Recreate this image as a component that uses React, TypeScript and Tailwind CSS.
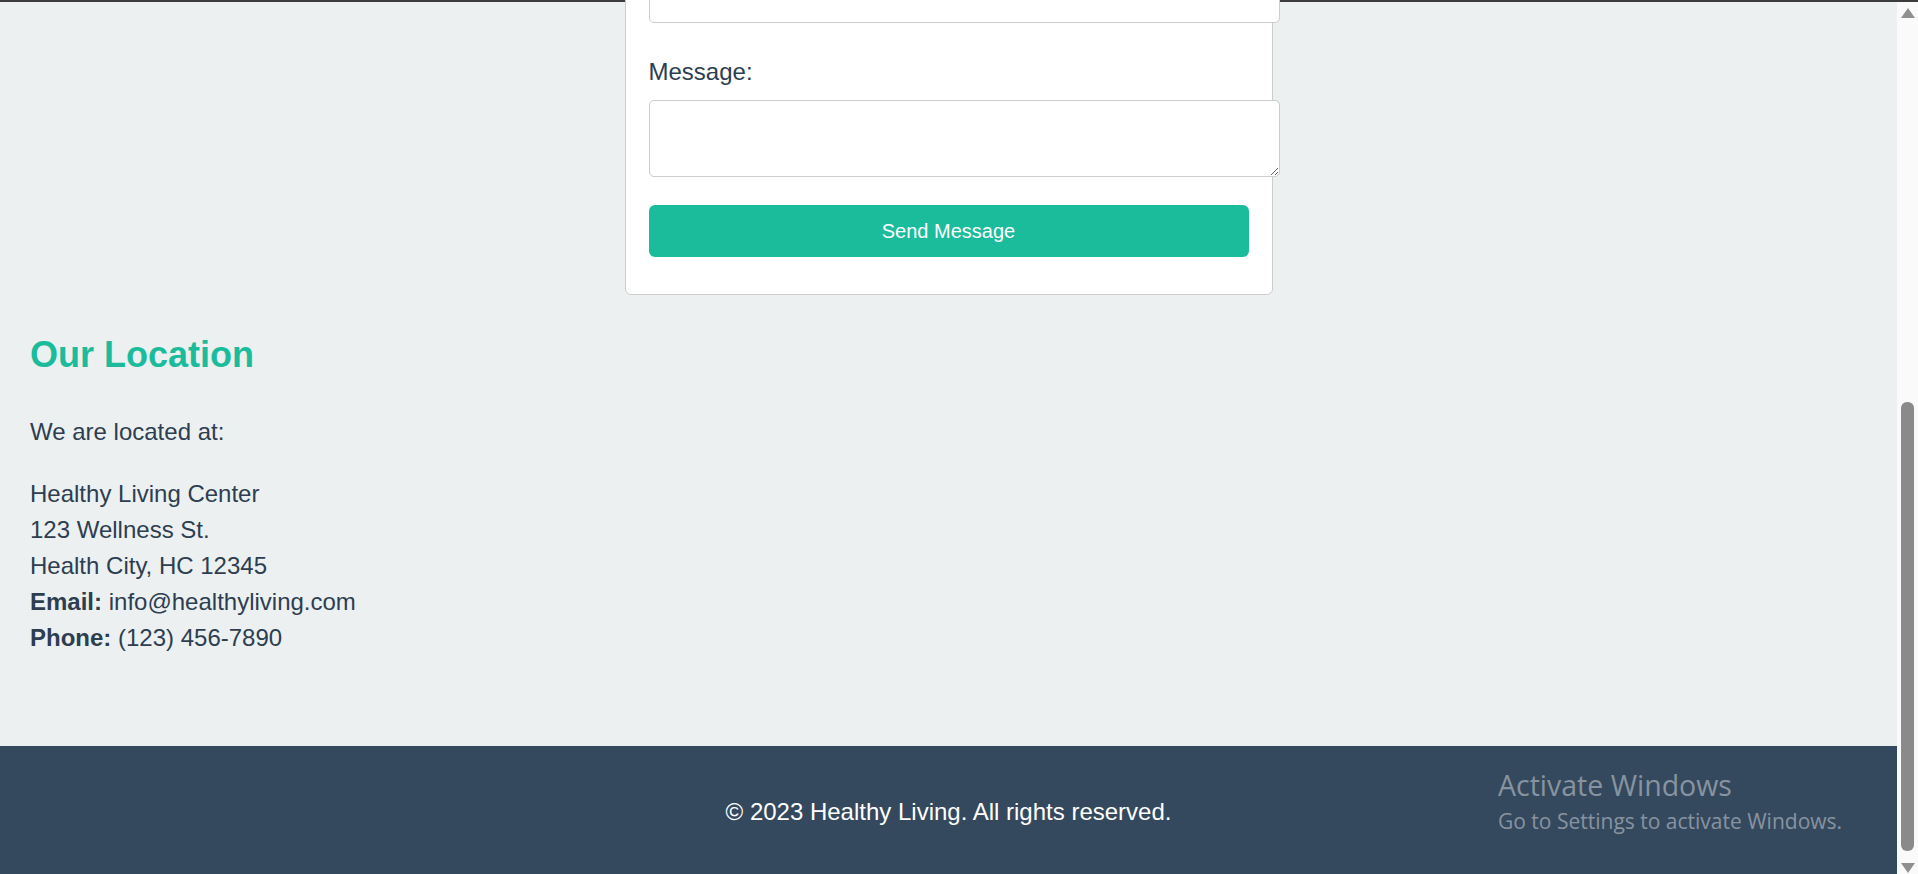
import React from "react";

const addressLines = ["Healthy Living Center", "123 Wellness St.", "Health City, HC 12345"];

const ContactCard = () => {
  return (
    <div className="mx-auto -mt-[50px] w-[648px] shrink-0 rounded-[6px] border border-[#cccccc] bg-white px-[23px] pt-[24px] pb-[37px]">
      <input
        type="text"
        className="block h-[46px] w-[631px] rounded-[5px] border border-[#cccccc] bg-white px-[15px] outline-none"
      />
      <label className="mt-[31px] block text-[24px] leading-[36px] text-[#2c3e50]">Message:</label>
      <textarea className="mt-[10px] block h-[77px] w-[631px] rounded-[5px] border border-[#cccccc] bg-white px-[15px] py-[10px] outline-none" />
      <button className="mt-[28px] flex h-[52px] w-full items-center justify-center rounded-[6px] bg-[#1abc9c] text-[20px] text-white">
        Send Message
      </button>
    </div>
  );
};

const Location = () => {
  return (
    <section className="mt-[39px]">
      <h2 className="text-[36px] leading-[42px] font-bold text-[#1abc9c]">Our Location</h2>
      <p className="mt-[38px] text-[24px] leading-[36px]">We are located at:</p>
      <div className="mt-[26px] text-[24px] leading-[36px]">
        {addressLines.map((line) => (
          <div key={line}>{line}</div>
        ))}
        <div>
          <strong className="font-bold">Email:</strong> info@healthyliving.com
        </div>
        <div>
          <strong className="font-bold">Phone:</strong> (123) 456-7890
        </div>
      </div>
    </section>
  );
};

const Scrollbar = () => {
  return (
    <div className="flex w-[21px] shrink-0 flex-col items-center bg-[#fafafa]">
      <svg width="14" height="10" viewBox="0 0 14 10" className="mt-[6px] shrink-0">
        <path d="M7 0 L14 10 L0 10 Z" fill="#8f8f8f" />
      </svg>
      <div className="mt-[384px] h-[449px] w-[13px] shrink-0 rounded-[6px] bg-[#8a8a8a]" />
      <svg width="14" height="10" viewBox="0 0 14 10" className="mt-[12px] shrink-0">
        <path d="M0 0 L14 0 L7 10 Z" fill="#8f8f8f" />
      </svg>
    </div>
  );
};

export default function App() {
  return (
    <div
      className="relative flex h-[874px] w-full flex-col overflow-hidden"
      style={{ fontFamily: '"Liberation Sans", Arial, sans-serif' }}
    >
      <div className="h-[2px] shrink-0 bg-[#3c3c3c]" />
      <div className="flex min-h-0 flex-1">
        <div className="flex min-w-0 flex-1 flex-col">
          <main className="flex min-h-0 flex-1 flex-col bg-[#ecf0f1] px-[30px] text-[#2c3e50]">
            <ContactCard />
            <Location />
          </main>
          <footer className="h-[128px] shrink-0 bg-[#34495e] pt-12 text-center text-[24px] leading-[36px] text-white">
            © 2023 Healthy Living. All rights reserved.
          </footer>
        </div>
        <Scrollbar />
      </div>

      <div
        className="pointer-events-none absolute top-[771px] left-[1498px] text-[#8893a0]"
        style={{ fontFamily: '"Open Sans", "Noto Sans", sans-serif' }}
      >
        <div className="text-[28.5px] leading-none">Activate Windows</div>
        <div className="mt-[11px] text-[21px] leading-none">Go to Settings to activate Windows.</div>
      </div>
    </div>
  );
}
